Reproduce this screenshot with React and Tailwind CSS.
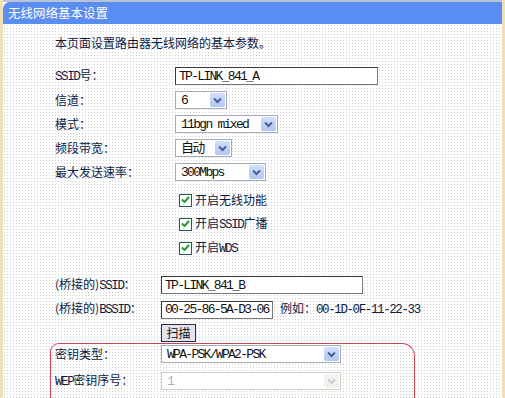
import React from "react"

const txt = "text-[12px] leading-none text-[#0c1c44]"
const font = { fontFamily: '"Noto Sans CJK SC", "Liberation Mono", sans-serif' }
const mono = { fontFamily: '"Liberation Mono", "Noto Sans CJK SC", monospace' }

// latin parts of the labels are narrower in the original (SimSun)
const L = ({ children }) => (
    <span className="text-[12.5px] tracking-[-1.4px]" style={mono}>{children}</span>
)

const Chevron = ({ color = "#4a5f8c" }) => (
    <svg width="9" height="7" viewBox="0 0 9 7">
        <path d="M1 1.5 L4.5 5 L8 1.5" fill="none" stroke={color} strokeWidth="2" />
    </svg>
)

const Select = ({ value, width, disabled }) => (
    <div
        className={
            "flex h-[18px] items-center justify-between border bg-white pl-[5px] " +
            (disabled ? "border-[#d2d0c4] text-[#b0b0b0]" : "border-[#a5acb5] text-[#111]")
        }
        style={{ width }}
    >
        <span className="text-[13px] tracking-[-1.7px]" style={mono}>{value}</span>
        <div
            className={
                "m-px flex h-[14px] w-[15px] items-center justify-center rounded-[2px] " +
                (disabled ? "bg-[#f2f2ee]" : "bg-gradient-to-b from-[#d3e0fd] to-[#b1c6f4]")
            }
        >
            <Chevron color={disabled ? "#c9ccd2" : "#4a5f8c"} />
        </div>
    </div>
)

const Input = ({ value, width }) => (
    <div
        className="flex h-[18px] items-center border border-[#3a3a3a] border-b-[#777] border-r-[#777] bg-white pl-[3px] text-[13px] tracking-[-1.7px] text-[#111]"
        style={{ width, ...mono }}
    >
        {value}
    </div>
)

const Check = ({ label }) => (
    <div className="flex h-6 items-center pl-[4px]">
        <div className="mr-[3px] flex h-[13px] w-[13px] items-center justify-center border border-[#2d5a52] bg-white">
            <svg width="9" height="8" viewBox="0 0 9 8">
                <path d="M1 3.5 L3.5 6 L8 1" fill="none" stroke="#22a32a" strokeWidth="2" />
            </svg>
        </div>
        <span>{label}</span>
    </div>
)

const Row = ({ label, labelW, children, h = "h-6" }) => (
    <div className={"flex items-center " + h}>
        <div className="shrink-0" style={{ width: labelW }}>{label}</div>
        {children}
    </div>
)

export default function App() {
    return (
        <div
            className={"relative h-[398px] w-[505px] overflow-hidden bg-white " + txt}
            style={font}
        >
            <div className="flex h-full border-l-[3px] border-r-[3px] border-l-[#f1dfb8] border-r-[#f1dfb8] bg-[radial-gradient(circle,#cfcfcf_0.7px,transparent_0.9px)] bg-size-[3px_3px]">
                <div className="flex w-full flex-col">
                    <div className="border-t-2 border-[#b9c3d6]">
                        <div className="flex h-[22px] items-center rounded-tl-[7px] bg-[#5a8df1] pl-[5px] text-[12.5px] text-white">
                            无线网络基本设置
                        </div>
                    </div>

                    <div className="flex h-[42px] items-center pl-[52px]">本页面设置路由器无线网络的基本参数。</div>

                    <div className="pl-[52px] pt-[3px]">
                        <Row label={<><L>SSID</L>号：</>} labelW={120}>
                            <Input value="TP-LINK_841_A" width={203} />
                        </Row>
                        <Row label="信道：" labelW={120}>
                            <Select value="6" width={52} />
                        </Row>
                        <Row label="模式：" labelW={120}>
                            <Select value="11bgn mixed" width={103} />
                        </Row>
                        <Row label="频段带宽：" labelW={120}>
                            <Select value="自动" width={57} />
                        </Row>
                        <Row label="最大发送速率：" labelW={120}>
                            <Select value="300Mbps" width={91} />
                        </Row>
                        <div className="pl-[120px] pt-[4px]">
                            <Check label="开启无线功能" />
                            <Check label={<>开启<L>SSID</L>广播</>} />
                            <Check label={<>开启<L>WDS</L></>} />
                        </div>
                    </div>

                    <div className="pl-[52px] pt-[13px]">
                        <Row label={<>(桥接的)<L>SSID</L>：</>} labelW={106}>
                            <Input value="TP-LINK_841_B" width={202} />
                        </Row>
                        <Row label={<>(桥接的)<L>BSSID</L>：</>} labelW={106} h="h-[25px]">
                            <Input value="00-25-86-5A-D3-06" width={112} />
                            <span className="ml-[7px]">例如：<L>00-1D-0F-11-22-33</L></span>
                        </Row>
                        <div className="flex h-[21px] items-center pl-[106px]">
                            <div className="flex h-[18px] w-[35px] items-center justify-center border border-[#2c2c44] bg-[#e4e4ee] text-[#111]">扫描</div>
                        </div>
                    </div>

                    <div className="ml-[47px] w-[365px] flex-1 rounded-tl-[9px] rounded-tr-[13px] border border-b-0 border-[#c8465a] pl-[4px]">
                        <Row label="密钥类型：" labelW={106} h="h-[20px]">
                            <Select value="WPA-PSK/WPA2-PSK" width={180} />
                        </Row>
                        <Row label={<><L>WEP</L>密钥序号：</>} labelW={106} h="h-[34px]">
                            <Select value="1" width={180} disabled />
                        </Row>
                    </div>
                </div>
            </div>
        </div>
    )
}
